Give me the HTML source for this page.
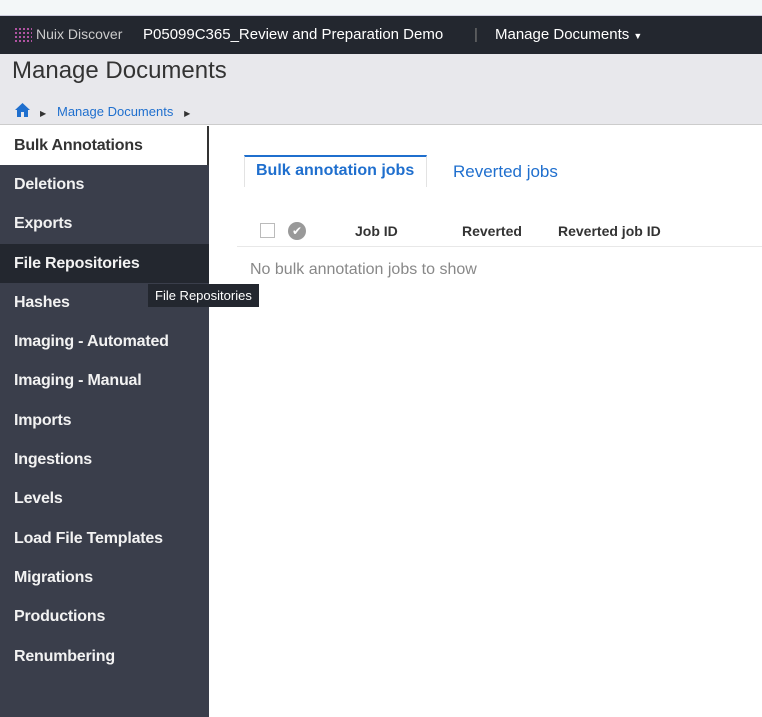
<!DOCTYPE html>
<html><head><meta charset="utf-8"><style>
*{margin:0;padding:0;box-sizing:border-box}
body{width:762px;height:717px;overflow:hidden;background:#fff;font-family:"Liberation Sans",sans-serif;position:relative}
.top{position:absolute;left:0;top:0;width:762px;height:16px;background:#f3f7f8;border-bottom:1px solid #ccd}
.nav{position:absolute;left:0;top:16px;width:762px;height:38px;background:#23272f;color:#fff;font-size:15px}
.nav span{position:absolute;top:10px;white-space:nowrap}
.hdr{position:absolute;left:0;top:54px;width:762px;height:71px;background:#e8e8ec;border-bottom:1px solid #ccc}
.side{position:absolute;left:0;top:126px;width:209px;height:591px;background:#3a3e4b}
.it{height:39.3px;line-height:39px;padding-left:14px;color:#f2f2f2;font-size:16px;font-weight:bold;letter-spacing:-0.2px}
.act{background:#fff;color:#333;height:39px;border-right:2px solid #333}
.hov{background:#23272f}
.tip{position:absolute;left:148px;top:284px;background:#23272f;color:#fff;font-size:13px;padding:4px 7px;white-space:nowrap}
</style></head><body>
<div class="top"></div>
<div class="nav">
<span style="left:14px;top:11px;width:18px;height:16px;background:radial-gradient(circle,#c45ab3 35%,transparent 40%) 0 0/4px 4px;"></span>
<span style="left:36px;color:#ccc;font-size:14px">Nuix Discover</span>
<span style="left:143px">P05099C365_Review and Preparation Demo</span>
<span style="left:474px;color:#777">|</span>
<span style="left:495px">Manage Documents <small style="font-size:9px">▼</small></span>
</div>
<div class="hdr">
<div style="position:absolute;left:12px;top:3px;font-size:24px;color:#333">Manage Documents</div>
<svg style="position:absolute;left:15px;top:49px" width="15" height="14" viewBox="0 0 15 14"><path d="M7.5 0L0 7h2v7h4V9h3v5h4V7h2z" fill="#1f6fce"/></svg>
<div style="position:absolute;left:40px;top:50px;font-size:13px;color:#1f6fce"><span style="color:#333;font-size:8px">▶</span>&nbsp;&nbsp;&nbsp;Manage Documents&nbsp;&nbsp;&nbsp;<span style="color:#333;font-size:8px">▶</span></div>
</div>
<div class="side">
<div class="it act">Bulk Annotations</div>
<div class="it">Deletions</div>
<div class="it">Exports</div>
<div class="it hov">File Repositories</div>
<div class="it">Hashes</div>
<div class="it">Imaging - Automated</div>
<div class="it">Imaging - Manual</div>
<div class="it">Imports</div>
<div class="it">Ingestions</div>
<div class="it">Levels</div>
<div class="it">Load File Templates</div>
<div class="it">Migrations</div>
<div class="it">Productions</div>
<div class="it">Renumbering</div>
</div>
<div class="tip">File Repositories</div>
<div style="position:absolute;left:244px;top:155px;width:183px;height:32px;border:1px solid #e3e3e3;border-top:2px solid #1f6fce;border-bottom:none"></div>
<div style="position:absolute;left:256px;top:162px;font-size:16px;font-weight:bold;color:#1f6fce">Bulk annotation jobs</div>
<div style="position:absolute;left:453px;top:162px;font-size:17px;color:#1f6fce">Reverted jobs</div>
<div style="position:absolute;left:260px;top:223px;width:15px;height:15px;border:1px solid #bbb"></div>
<div style="position:absolute;left:288px;top:222px;width:18px;height:18px;border-radius:50%;background:#999;color:#fff;font-size:12px;text-align:center;line-height:18px">✔</div>
<div style="position:absolute;left:355px;top:223px;font-size:14px;font-weight:bold;color:#333">Job ID</div>
<div style="position:absolute;left:462px;top:223px;font-size:14px;font-weight:bold;color:#333">Reverted</div>
<div style="position:absolute;left:558px;top:223px;font-size:14px;font-weight:bold;color:#333">Reverted job ID</div>
<div style="position:absolute;left:237px;top:246px;width:525px;height:1px;background:#e8e8e8"></div>
<div style="position:absolute;left:250px;top:261px;font-size:16px;color:#888">No bulk annotation jobs to show</div>
</body></html>
